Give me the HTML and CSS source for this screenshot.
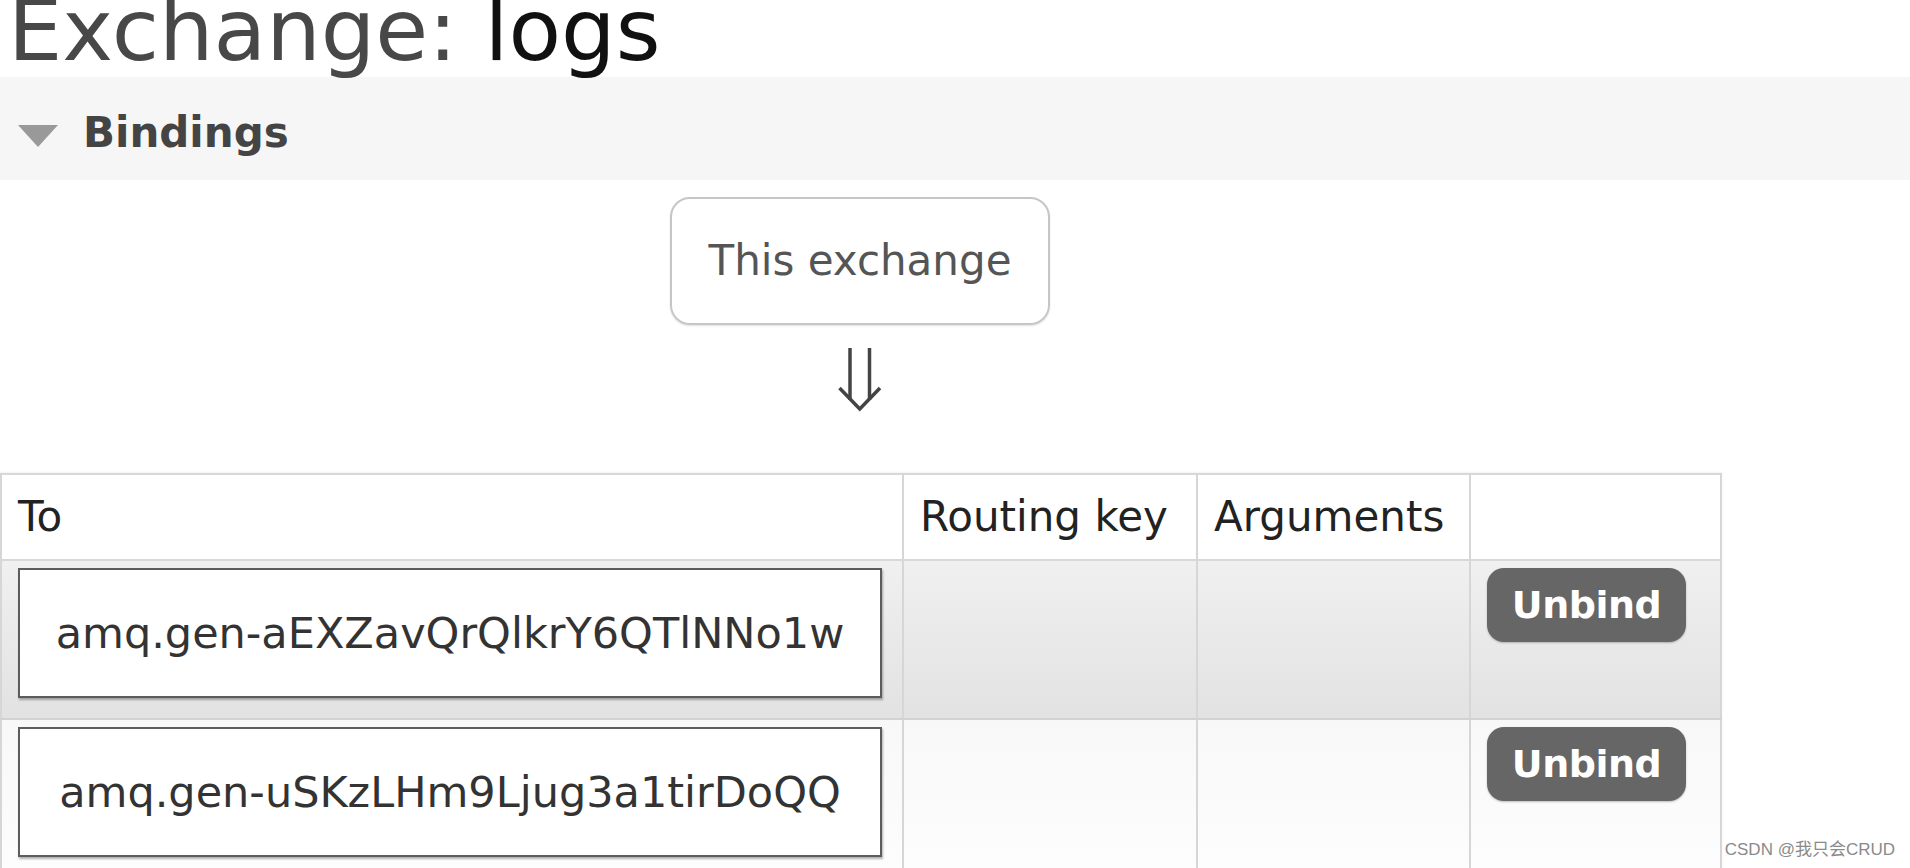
FILE: index.html
```html
<!DOCTYPE html>
<html lang="en">
<head>
    <meta charset="UTF-8">
    <meta name="viewport" content="width=device-width, initial-scale=1.0">
    <title>Exchange: logs</title>
    <link rel="stylesheet" href="styles.css">
</head>
<body>
    <h1 class="page-title">Exchange: <b>logs</b></h1>

    <div class="section">
        <div class="section-header">
            <span class="toggle"></span>
            <h2>Bindings</h2>
        </div>

        <div class="bindings">
            <div class="diagram">
                <div class="this-exchange">This exchange</div>
                <svg class="arrow" width="44" height="64" viewBox="0 0 44 64">
                    <line x1="12" y1="0" x2="12" y2="52" />
                    <line x1="31.5" y1="0" x2="31.5" y2="52" />
                    <polyline points="1.5,40 21.75,61 42,40" />
                </svg>
            </div>

            <table class="list">
                <colgroup>
                    <col class="col-to">
                    <col class="col-key">
                    <col class="col-args">
                    <col class="col-action">
                </colgroup>
                <thead>
                    <tr>
                        <th>To</th>
                        <th>Routing key</th>
                        <th>Arguments</th>
                        <th></th>
                    </tr>
                </thead>
                <tbody>
                    <tr class="alt1">
                        <td><span class="queue">amq.gen-aEXZavQrQlkrY6QTlNNo1w</span></td>
                        <td></td>
                        <td></td>
                        <td><button class="unbind">Unbind</button></td>
                    </tr>
                    <tr class="alt2">
                        <td><span class="queue">amq.gen-uSKzLHm9Ljug3a1tirDoQQ</span></td>
                        <td></td>
                        <td></td>
                        <td><button class="unbind">Unbind</button></td>
                    </tr>
                </tbody>
            </table>
        </div>
    </div>

    <div class="watermark">CSDN @我只会CRUD</div>
</body>
</html>
```

FILE: styles.css
```css
body {
    margin: 0;
    font-family: "DejaVu Sans", Verdana, sans-serif;
    font-size: 42px;
    color: #484848;
    background-color: #fff;
    overflow: hidden;
}
.page-title {
    font-size: 86px;
    font-weight: normal;
    line-height: 86px;
    margin: -13px 0 4px 8px;
    color: #484848;
    white-space: nowrap;
}
.page-title b {
    font-weight: normal;
    color: #111;
}
.section-header {
    display: flex;
    align-items: center;
    height: 94px;
    padding-top: 9px;
    background-color: #f6f6f6;
}
.toggle {
    width: 0;
    height: 0;
    margin: 6px 25px 0 18px;
    border-left: 20px solid transparent;
    border-right: 20px solid transparent;
    border-top: 22px solid #999;
}
.section-header h2 {
    margin: 0;
    font-size: 42px;
    line-height: 50px;
    font-weight: bold;
    color: #444;
}
.diagram {
    width: 1720px;
    display: flex;
    flex-direction: column;
    align-items: center;
    padding-top: 17px;
}
.this-exchange {
    width: 376px;
    padding: 37px 0;
    line-height: 50px;
    text-align: center;
    color: #555;
    border: 2px solid #c6c6c6;
    border-radius: 20px;
    box-shadow: 0 1px 2px rgba(0,0,0,0.12);
}
.arrow {
    display: block;
    margin: 23px 0 0 0;
    fill: none;
    stroke: #444;
    stroke-width: 3.5;
}
.list {
    margin-top: 61px;
    width: 1720px;
    table-layout: fixed;
    border-collapse: collapse;
    border-top: 2px solid #d8d8d8;
    box-shadow: 0 -1px 2px rgba(0,0,0,0.06);
}
.col-to { width: 902px; }
.col-key { width: 294px; }
.col-args { width: 273px; }
.col-action { width: 251px; }
.list th,
.list td {
    border: 2px solid #d6d6d6;
    border-top: none;
}
.list th {
    height: 84px;
    padding: 0 16px;
    font-weight: normal;
    text-align: left;
    color: #222;
    line-height: 50px;
    background-color: #fff;
    white-space: nowrap;
}
.list td {
    height: 130px;
    padding: 7px 16px 20px;
    vertical-align: top;
}
.list thead th {
    border-bottom: 2px solid #d8d8d8;
}
.alt1 td {
    background: linear-gradient(#f0f0f0, #e2e2e2);
    border-bottom-color: #d2d2d2;
}
.alt2 td {
    background: linear-gradient(#f8f8f8, #fdfdfd);
}
.queue {
    display: block;
    box-sizing: border-box;
    width: 864px;
    height: 130px;
    padding: 0 16px;
    font-size: 43px;
    line-height: 126px;
    text-align: center;
    color: #333;
    background-color: #fff;
    border: 2px solid #5c5c5c;
    box-shadow: 1px 2px 2px rgba(0,0,0,0.3);
    white-space: nowrap;
}
.unbind {
    display: block;
    box-sizing: border-box;
    width: 199px;
    height: 74px;
    padding: 0;
    border: none;
    border-radius: 17px;
    background-color: #666;
    color: #fff;
    font-family: "DejaVu Sans", Verdana, sans-serif;
    font-size: 38px;
    font-weight: bold;
    letter-spacing: -0.5px;
    box-shadow: 0 1px 2px rgba(0,0,0,0.25);
}
.watermark {
    position: absolute;
    right: 15px;
    bottom: 8px;
    font-family: "Liberation Sans", "Noto Sans CJK SC", sans-serif;
    font-size: 17px;
    color: #8a8a8a;
    white-space: nowrap;
}
```
